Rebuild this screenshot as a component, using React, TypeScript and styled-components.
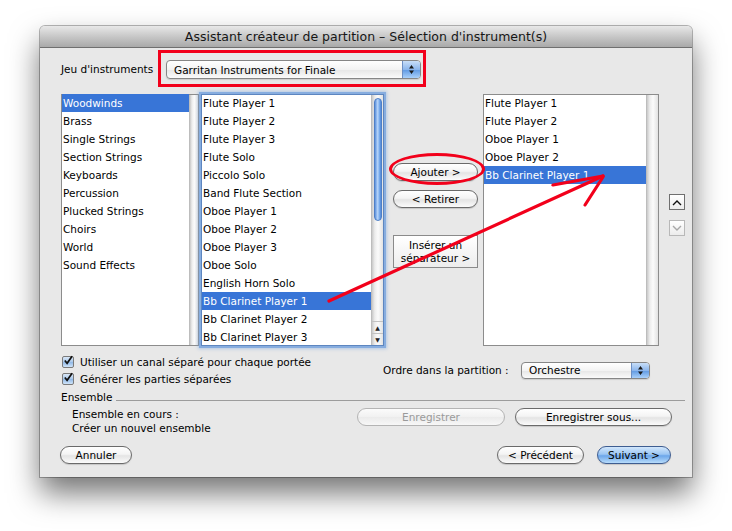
import React from "react";
import styled, { createGlobalStyle, css } from "styled-components";

const GlobalStyle = createGlobalStyle`
  html, body {
    margin: 0;
    padding: 0;
    background: #ffffff;
  }
  body {
    font-family: "DejaVu Sans", "Liberation Sans", sans-serif;
    font-size: 10.5px;
    color: #000000;
  }
`;

const Stage = styled.div`
  box-sizing: border-box;
  height: 531px;
  padding: 26px 0 0 40px;
`;

const Window = styled.div`
  position: relative;
  width: 652px;
  height: 451px;
  display: flex;
  flex-direction: column;
  background: #e8e8e8;
  border-radius: 5px 5px 0 0;
  box-shadow: 0 16px 30px rgba(0, 0, 0, 0.55), 0 0 0 1px rgba(0, 0, 0, 0.28);
`;

const TitleBar = styled.div`
  box-sizing: border-box;
  flex: none;
  height: 22px;
  display: flex;
  align-items: center;
  justify-content: center;
  background: linear-gradient(#e8e8e8, #c4c4c4 55%, #a9a9a9);
  border-bottom: 1px solid #6f6f6f;
  border-radius: 5px 5px 0 0;
  font-size: 12.5px;
  color: #161616;
`;

const Body = styled.div`
  flex: 1;
  display: flex;
  flex-direction: column;
  padding: 0 7px 12px 21px;
`;

const TopRow = styled.div`
  display: flex;
  align-items: center;
  height: 37px;
  margin-top: 2px;
`;

const Label = styled.span<{ $width?: number }>`
  flex: none;
  width: ${({ $width }) => ($width ? `${$width}px` : "auto")};
  white-space: nowrap;
`;

const Highlight = styled.div`
  box-sizing: border-box;
  width: 268px;
  height: 37px;
  padding: 7px 2px 5px 5px;
  border: 3px solid #f2001b;
`;

const Popup = styled.div<{ $width: number; $height: number }>`
  box-sizing: border-box;
  width: ${({ $width }) => $width}px;
  height: ${({ $height }) => $height}px;
  display: flex;
  border: 1px solid #868686;
  border-radius: 4px;
  background: linear-gradient(#ffffff, #f3f3f3 50%, #e6e6e6 51%, #fafafa);
  box-shadow: 0 1px 1px rgba(0, 0, 0, 0.12);
  overflow: hidden;
`;

const PopupText = styled.span`
  flex: 1;
  display: flex;
  align-items: center;
  padding-left: 7px;
  white-space: nowrap;
`;

const PopupArrows = styled.span`
  flex: none;
  width: 17px;
  display: flex;
  align-items: center;
  justify-content: center;
  border-left: 1px solid #6d8fc4;
  background: linear-gradient(#c8def8, #8cb6ec 50%, #5e98e2 51%, #a9d0fa);
`;

const ListsRow = styled.div`
  display: flex;
  height: 252px;
  margin-top: 7px;
`;

const ListBox = styled.div<{ $width: number; $focused?: boolean; $gap?: number }>`
  box-sizing: border-box;
  flex: none;
  width: ${({ $width }) => $width}px;
  height: 100%;
  margin-left: ${({ $gap }) => $gap ?? 0}px;
  display: flex;
  background: #ffffff;
  border: 1px solid #8c8c8c;
  ${({ $focused }) =>
    $focused &&
    css`
      border-color: #5d86c0;
      box-shadow: 0 0 0 2px #87addf, 0 0 3px 3px rgba(110, 160, 225, 0.45);
    `}
`;

const Items = styled.div`
  flex: 1;
  min-width: 0;
  margin-top: -1px;
  overflow: hidden;
`;

const Item = styled.div<{ $selected?: boolean }>`
  height: 18px;
  line-height: 18px;
  padding-left: 1px;
  white-space: nowrap;
  ${({ $selected }) =>
    $selected &&
    css`
      background: #3875d7;
      color: #ffffff;
    `}
`;

const Track = styled.div<{ $width: number }>`
  flex: none;
  width: ${({ $width }) => $width}px;
  display: flex;
  flex-direction: column;
  align-items: center;
  background: linear-gradient(90deg, #c9c9c9, #ececec 25%, #fbfbfb 55%, #e2e2e2);
  border-left: 1px solid #bdbdbd;
`;

const Thumb = styled.div`
  box-sizing: border-box;
  width: 8px;
  height: 123px;
  margin-top: 3px;
  border-radius: 4px;
  border: 1px solid #4f7fc6;
  background: linear-gradient(90deg, #5d91dc, #b8d6fa 45%, #7fb0ee 70%, #4e86d6);
`;

const Spacer = styled.div`
  flex: 1;
`;

const ScrollArrow = styled.div`
  box-sizing: border-box;
  width: 100%;
  height: 12px;
  display: flex;
  align-items: center;
  justify-content: center;
  border-top: 1px solid #c2c2c2;
  font-size: 6px;
  color: #222222;
`;

const MiddleColumn = styled.div`
  flex: none;
  width: 99px;
  display: flex;
  flex-direction: column;
  padding: 69px 0 0 9px;
  box-sizing: border-box;
`;

const PillButton = styled.div<{ $width: number; $disabled?: boolean; $primary?: boolean }>`
  box-sizing: border-box;
  flex: none;
  width: ${({ $width }) => $width}px;
  height: 18px;
  display: flex;
  align-items: center;
  justify-content: center;
  white-space: nowrap;
  border: 1px solid #6a6a6a;
  border-radius: 9px;
  background: linear-gradient(#ffffff, #f4f4f4 45%, #e4e4e4 55%, #fbfbfb);
  box-shadow: 0 1px 1px rgba(0, 0, 0, 0.15);
  ${({ $disabled }) =>
    $disabled &&
    css`
      color: #9a9a9a;
      border-color: #b4b4b4;
      background: linear-gradient(#fbfbfb, #f1f1f1 50%, #ebebeb 51%, #f7f7f7);
      box-shadow: none;
    `}
  ${({ $primary }) =>
    $primary &&
    css`
      border-color: #3e5d91;
      background: linear-gradient(#d2e6fb, #9cc6f3 45%, #6ca6ea 55%, #b8dcfb);
    `}
`;

const Circled = styled.div`
  position: relative;

  &::after {
    content: "";
    position: absolute;
    top: -10px;
    bottom: -4px;
    left: -4px;
    right: -2px;
    border: 3px solid #f2001b;
    border-radius: 50%;
  }
`;

const BevelButton = styled.div`
  box-sizing: border-box;
  width: 85px;
  height: 33px;
  margin-top: 27px;
  display: flex;
  align-items: center;
  justify-content: center;
  text-align: center;
  line-height: 13px;
  border: 1px solid #8a8a8a;
  background: linear-gradient(#ffffff, #ededed);
`;

const ArrowColumn = styled.div`
  flex: none;
  display: flex;
  flex-direction: column;
  gap: 10px;
  padding: 100px 0 0 10px;
`;

const SquareButton = styled.div<{ $disabled?: boolean }>`
  box-sizing: border-box;
  width: 16px;
  height: 16px;
  display: flex;
  align-items: center;
  justify-content: center;
  border: 1px solid ${({ $disabled }) => ($disabled ? "#b8b8b8" : "#6f6f6f")};
  background: linear-gradient(#ffffff, #ececec);
  color: ${({ $disabled }) => ($disabled ? "#a8a8a8" : "#111111")};
`;

const OptionsRow = styled.div`
  display: flex;
  align-items: center;
  height: 34px;
  margin-top: 7px;
`;

const Checks = styled.div`
  flex: none;
  width: 322px;
  display: flex;
  flex-direction: column;
`;

const CheckRow = styled.div`
  display: flex;
  align-items: center;
  height: 17px;
  gap: 6px;
  padding-left: 1px;
`;

const CheckBox = styled.span`
  box-sizing: border-box;
  width: 12px;
  height: 12px;
  display: flex;
  align-items: center;
  justify-content: center;
  border: 1px solid #7a7a7a;
  border-radius: 2px;
  background: linear-gradient(#d9e7f7, #a9c8ea 50%, #8fb7e6 51%, #cfe4f9);
`;

const GroupHeader = styled.div`
  display: flex;
  align-items: center;
  height: 12px;
  margin-top: 4px;
`;

const Rule = styled.div`
  flex: 1;
  height: 1px;
  margin: 6px 0 0 3px;
  background: #9c9c9c;
`;

const EnsembleRow = styled.div`
  display: flex;
  align-items: flex-start;
  margin-top: 4px;
`;

const EnsembleText = styled.div`
  padding-left: 11px;
  line-height: 14px;
`;

const ButtonGroup = styled.div<{ $right: number }>`
  display: flex;
  gap: 10px;
  margin: 1px ${({ $right }) => $right}px 0 auto;
`;

const Footer = styled.div`
  display: flex;
  align-items: center;
  margin-top: auto;
  margin-bottom: 1px;
`;

const Overlay = styled.svg`
  position: absolute;
  left: 0;
  top: 0;
  pointer-events: none;
`;

const categories = [
  "Woodwinds",
  "Brass",
  "Single Strings",
  "Section Strings",
  "Keyboards",
  "Percussion",
  "Plucked Strings",
  "Choirs",
  "World",
  "Sound Effects",
];

const instruments = [
  "Flute Player 1",
  "Flute Player 2",
  "Flute Player 3",
  "Flute Solo",
  "Piccolo Solo",
  "Band Flute Section",
  "Oboe Player 1",
  "Oboe Player 2",
  "Oboe Player 3",
  "Oboe Solo",
  "English Horn Solo",
  "Bb Clarinet Player 1",
  "Bb Clarinet Player 2",
  "Bb Clarinet Player 3",
];

const chosen = ["Flute Player 1", "Flute Player 2", "Oboe Player 1", "Oboe Player 2", "Bb Clarinet Player 1"];

const UpDown = () => (
  <svg width="7" height="11" viewBox="0 0 7 11">
    <path d="M3.5 1 L6 4.5 L1 4.5 Z M3.5 10 L6 6.5 L1 6.5 Z" fill="#1b1b1b" />
  </svg>
);

const Chevron = ({ up }: { up?: boolean }) => (
  <svg width="10" height="7" viewBox="0 0 10 7">
    <path
      d={up ? "M1 6 L5 2 L9 6" : "M1 1 L5 5 L9 1"}
      fill="none"
      stroke="currentColor"
      strokeWidth="1.4"
    />
  </svg>
);

const Check = () => (
  <svg width="11" height="11" viewBox="0 0 11 11" style={{ marginTop: -3 }}>
    <path d="M2 5.5 L4.5 8.5 L10 0.8" fill="none" stroke="#111" strokeWidth="1.9" />
  </svg>
);

export default function App() {
  return (
    <Stage>
      <GlobalStyle />
      <Window>
        <TitleBar>Assistant créateur de partition – Sélection d'instrument(s)</TitleBar>
        <Body>
          <TopRow>
            <Label $width={97}>Jeu d'instruments</Label>
            <Highlight>
              <Popup $width={255} $height={19}>
                <PopupText>Garritan Instruments for Finale</PopupText>
                <PopupArrows>
                  <UpDown />
                </PopupArrows>
              </Popup>
            </Highlight>
          </TopRow>

          <ListsRow>
            <ListBox $width={138}>
              <Items>
                {categories.map((c, i) => (
                  <Item key={c} $selected={i === 0}>
                    {c}
                  </Item>
                ))}
              </Items>
              <Track $width={8} />
            </ListBox>

            <ListBox $width={183} $gap={2} $focused>
              <Items>
                {instruments.map((c) => (
                  <Item key={c} $selected={c === "Bb Clarinet Player 1"}>
                    {c}
                  </Item>
                ))}
              </Items>
              <Track $width={11}>
                <Thumb />
                <Spacer />
                <ScrollArrow>▲</ScrollArrow>
                <ScrollArrow>▼</ScrollArrow>
              </Track>
            </ListBox>

            <MiddleColumn>
              <Circled>
                <PillButton $width={85}>Ajouter &gt;</PillButton>
              </Circled>
              <PillButton $width={85} style={{ marginTop: 9 }}>
                &lt; Retirer
              </PillButton>
              <BevelButton>
                Insérer un
                <br />
                séparateur &gt;
              </BevelButton>
            </MiddleColumn>

            <ListBox $width={176}>
              <Items>
                {chosen.map((c) => (
                  <Item key={c} $selected={c === "Bb Clarinet Player 1"}>
                    {c}
                  </Item>
                ))}
              </Items>
              <Track $width={11} />
            </ListBox>

            <ArrowColumn>
              <SquareButton>
                <Chevron up />
              </SquareButton>
              <SquareButton $disabled>
                <Chevron />
              </SquareButton>
            </ArrowColumn>
          </ListsRow>

          <OptionsRow>
            <Checks>
              <CheckRow>
                <CheckBox>
                  <Check />
                </CheckBox>
                Utiliser un canal séparé pour chaque portée
              </CheckRow>
              <CheckRow>
                <CheckBox>
                  <Check />
                </CheckBox>
                Générer les parties séparées
              </CheckRow>
            </Checks>
            <Label $width={138}>Ordre dans la partition :</Label>
            <Popup $width={129} $height={17}>
              <PopupText>Orchestre</PopupText>
              <PopupArrows>
                <UpDown />
              </PopupArrows>
            </Popup>
          </OptionsRow>

          <GroupHeader>
            Ensemble
            <Rule />
          </GroupHeader>

          <EnsembleRow>
            <EnsembleText>
              Ensemble en cours :
              <br />
              Créer un nouvel ensemble
            </EnsembleText>
            <ButtonGroup $right={13}>
              <PillButton $width={148} $disabled>
                Enregistrer
              </PillButton>
              <PillButton $width={157}>Enregistrer sous...</PillButton>
            </ButtonGroup>
          </EnsembleRow>

          <Footer>
            <PillButton $width={72} style={{ marginLeft: -1 }}>
              Annuler
            </PillButton>
            <ButtonGroup $right={14} style={{ gap: 13, marginTop: 0 }}>
              <PillButton $width={87}>&lt; Précédent</PillButton>
              <PillButton $width={74} $primary>
                Suivant &gt;
              </PillButton>
            </ButtonGroup>
          </Footer>
        </Body>

        <Overlay width="652" height="451" viewBox="0 0 652 451">
          <g stroke="#f2001b" strokeWidth="3.2" strokeLinecap="round" fill="none">
            <path d="M289 275 L563 150" />
            <path d="M513 159 L563 150" />
            <path d="M545 179 L563 151" />
          </g>
        </Overlay>
      </Window>
    </Stage>
  );
}
